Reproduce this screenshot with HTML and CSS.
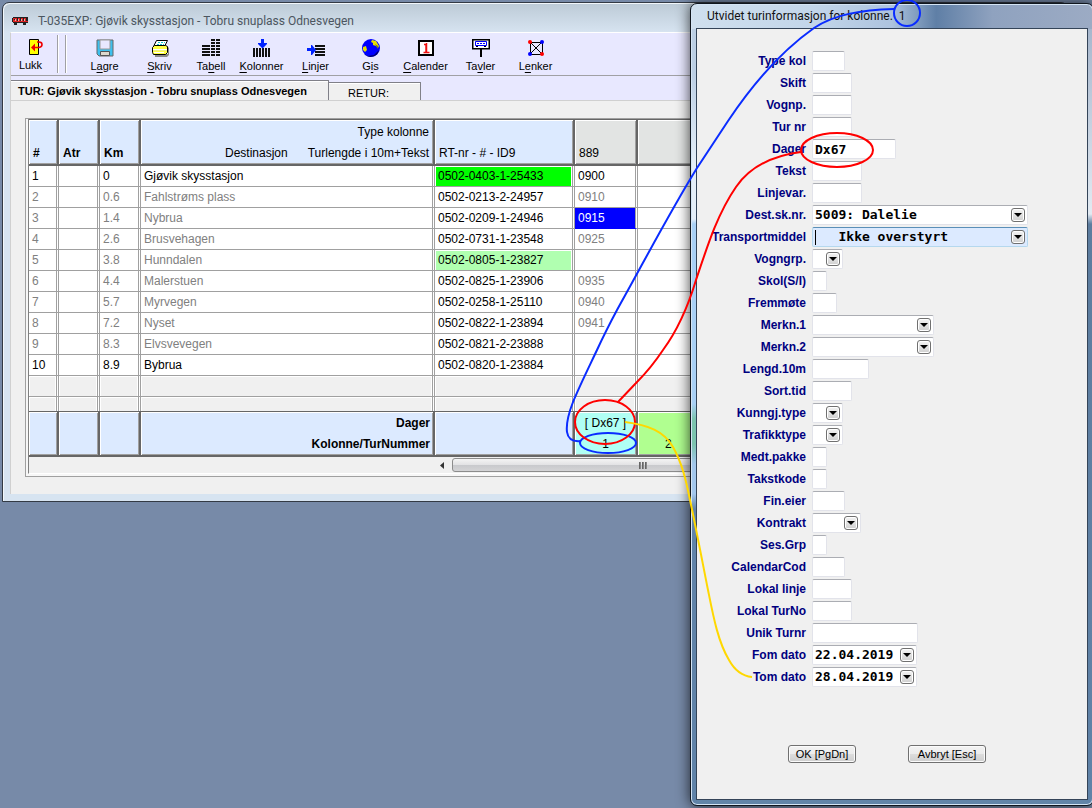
FILE: index.html
```html
<!DOCTYPE html>
<html lang="no">
<head>
<meta charset="utf-8">
<title>T-035EXP: Gjøvik skysstasjon - Tobru snuplass Odnesvegen</title>
<link rel="stylesheet" href="styles.css">
</head>
<body class="desktop">
<main class="window">
  <header class="window-title">
    <svg class="bus" width="17" height="9" viewBox="0 0 17 9" aria-hidden="true"><path fill="#d22" d="M1 1h15v6H1z"/><path fill="#222" d="M0 2h1v4H0zM1 1h15v1H1zM2 3h2v1H2zM5 2h1v3H5zM8 2h1v3H8zM11 2h1v3h-1zM14 2h2v3h-2zM1 6h15v1H1zM2 7h3v2H2zM11 7h3v2h-3z"/><path fill="#eaa" d="M3 3h1v2H3zM6 3h1v2H6zM9 3h1v2H9zM12 3h1v2h-1z"/></svg>
    <h1>T-035EXP: Gjøvik skysstasjon - Tobru snuplass Odnesvegen</h1>
  </header>
  <div class="client">
    <nav class="toolbar">
      <button class="tool tool-close"><svg width="18" height="18" viewBox="0 0 18 18"><path d="M5.500 1.500h9v15h-9z" fill="#ff0" stroke="#000"/><path d="M13 3.500h2q3 0 3 2.500t-3 3H9" transform="translate(0 .5)" fill="none" stroke="#e00" stroke-width="1.600"/><path d="M7 9.500l4-4v8z" fill="#e00"/></svg><span>Lukk</span></button>
      <span class="grip"></span>
      <button class="tool tool-m"><svg width="18" height="18" viewBox="0 0 18 18"><path d="M1 1h16v16H3l-2-2z" fill="#3cc0ee" stroke="#666"/><path d="M4 1h10v9H4z" fill="#e8e8ff" stroke="#999"/><path d="M4.500 12.500h9v4h-9z" fill="#ddd8cc" stroke="#555"/></svg><span>L<u>a</u>gre</span></button>
      <button class="tool tool-m"><svg width="18" height="18" viewBox="0 0 18 18"><path d="M4 15h13V8l1 1v7l-2 2H4z" fill="#888"/><path d="M5.500 1.500h11l-3 6h-11z" fill="#fff" stroke="#000"/><path d="M7 3.500h7M6 5.500h7" stroke="#1cc" stroke-dasharray="2 1"/><path d="M1.500 8.500l2-2h11l2 1v6l-2 2h-12l-1-2z" fill="#ff4" stroke="#000"/><path d="M2 10.500h14M3 13.500h10" stroke="#fff"/><path d="M2 11.500h14" stroke="#ee8"/></svg><span><u>S</u>kriv</span></button>
      <button class="tool tool-s"><svg width="18" height="18" viewBox="0 0 18 18"><path d="M0 7h8M0 10h8M0 13h8M0 16h8M9 4h4M9 7h4M9 10h4M9 13h4M9 16h4M9 1h4M14 1h4M14 4h4M14 7h4M14 10h4M14 13h4M14 16h4" stroke="#111" stroke-width="2"/></svg><span>Ta<u>b</u>ell</span></button>
      <button class="tool tool-k"><svg width="18" height="18" viewBox="0 0 18 18"><path d="M1 9v9M4 9v9M7 9v9M10 9v9M13 9v9M16 9v9" stroke="#111" stroke-width="2"/><path d="M8 0h3v4h3v1L9.500 9.500 5 5V4h3z" fill="#02f"/></svg><span><u>K</u>olonner</span></button>
      <button class="tool tool-m"><svg width="18" height="18" viewBox="0 0 18 18"><path d="M8 7h10M8 10h10M8 13h10M8 16h10" stroke="#111" stroke-width="2"/><path d="M0 9h4V6h1l4 5-4 5H4v-4H0z" fill="#02f"/></svg><span><u>L</u>injer</span></button>
      <button class="tool tool-m"><svg width="18" height="18" viewBox="0 0 18 18"><circle cx="9" cy="9" r="9" fill="#00f"/><path d="M2 15a9 9 0 0 0 14-1l1-3-5 5-6 1z" fill="#00006a"/><path d="M10 1l4 1 3 5-1 2-2-2-3-1V4L9 3zM1 8l3-1 1 4-2 2-2-2z" fill="#e8e000"/><path d="M13 5l3 2v3l-2-3z" fill="#7a7a20"/></svg><span>G<u>i</u>s</span></button>
      <button class="tool tool-m"><svg width="18" height="18" viewBox="0 0 18 18"><path d="M2 2h14v14H2z" fill="#fff" stroke="#000" stroke-width="2"/><path d="M7 5.500h2V13M6.500 13.500h6M9.500 4v9" fill="none" stroke="#e11" stroke-width="1.500"/></svg><span><u>C</u>alender</span></button>
      <button class="tool tool-m"><svg width="18" height="18" viewBox="0 0 18 18"><path d="M.75.75h16.500v9H.75z" fill="#fff" stroke="#000" stroke-width="1.500"/><path d="M3.500 2.500h11v4h-11z" fill="#fff" stroke="#00f"/><path d="M5 4.500h8" stroke="#00f" stroke-dasharray="2 1"/><path d="M4 7h2v1H4zM12 7h2v1h-2zM8 9h2v9H8z"/></svg><span>Ta<u>v</u>ler</span></button>
      <button class="tool tool-m"><svg width="18" height="18" viewBox="0 0 18 18"><path d="M3.500 3.500h12v12h-12zM3 3l12 12M15 3L3 15" fill="none" stroke="#000"/><g fill="#f00"><circle cx="3" cy="3" r="2"/><circle cx="15" cy="15" r="2"/></g><g fill="#00f"><circle cx="15" cy="3" r="2"/><circle cx="3" cy="15" r="2"/></g></svg><span>L<u>e</u>nker</span></button>
    </nav>
    <div class="tabs" role="tablist">
      <button class="tab tab-active" role="tab" aria-selected="true">TUR: Gjøvik skysstasjon - Tobru snuplass Odnesvegen</button>
      <button class="tab" role="tab" aria-selected="false">RETUR:</button>
    </div>
    <section class="page">
      <div class="grid-frame">
        <table class="grid">
          <colgroup><col class="c-no"><col class="c-atr"><col class="c-km"><col class="c-dest"><col class="c-rt"><col class="c-run"><col></colgroup>
          <thead>
            <tr><th>#</th><th>Atr</th><th>Km</th><th class="right plain">Type kolonne<br><span class="gap">Destinasjon</span>Turlengde i 10m+Tekst</th><th class="plain">RT-nr - # - ID9</th><th class="plain run">889</th><th class="run"></th></tr>
          </thead>
          <tbody>
            <tr class="main"><td>1</td><td></td><td>0</td><td>Gjøvik skysstasjon</td><td class="rt green">0502-0403-1-25433</td><td>0900</td><td></td></tr>
            <tr><td>2</td><td></td><td>0.6</td><td>Fahlstrøms plass</td><td class="rt">0502-0213-2-24957</td><td>0910</td><td></td></tr>
            <tr><td>3</td><td></td><td>1.4</td><td>Nybrua</td><td class="rt">0502-0209-1-24946</td><td class="selected">0915</td><td></td></tr>
            <tr><td>4</td><td></td><td>2.6</td><td>Brusvehagen</td><td class="rt">0502-0731-1-23548</td><td>0925</td><td></td></tr>
            <tr><td>5</td><td></td><td>3.8</td><td>Hunndalen</td><td class="rt pale">0502-0805-1-23827</td><td></td><td></td></tr>
            <tr><td>6</td><td></td><td>4.4</td><td>Malerstuen</td><td class="rt">0502-0825-1-23906</td><td>0935</td><td></td></tr>
            <tr><td>7</td><td></td><td>5.7</td><td>Myrvegen</td><td class="rt">0502-0258-1-25110</td><td>0940</td><td></td></tr>
            <tr><td>8</td><td></td><td>7.2</td><td>Nyset</td><td class="rt">0502-0822-1-23894</td><td>0941</td><td></td></tr>
            <tr><td>9</td><td></td><td>8.3</td><td>Elvsvevegen</td><td class="rt">0502-0821-2-23888</td><td></td><td></td></tr>
            <tr class="main"><td>10</td><td></td><td>8.9</td><td>Bybrua</td><td class="rt">0502-0820-1-23884</td><td></td><td></td></tr>
            <tr class="empty"><td></td><td></td><td></td><td></td><td></td><td></td><td></td></tr>
            <tr class="empty short"><td></td><td></td><td></td><td></td><td></td><td></td><td></td></tr>
          </tbody>
          <tfoot>
            <tr><td></td><td></td><td></td><td class="right bold">Dager<br>Kolonne/TurNummer</td><td></td><td class="center cyan">[ Dx67 ]<br>1</td><td class="lime"><br><span class="second">2</span></td></tr>
          </tfoot>
        </table>
        <div class="scroll">
          <svg class="scroll-arrow" width="18" height="16" viewBox="0 0 18 16" aria-hidden="true"><path d="M10 4v7L6 7.500z" fill="#333"/></svg>
          <div class="thumb"><i></i><i></i><i></i></div>
        </div>
      </div>
    </section>
  </div>
</main>

<section class="dialog" role="dialog" aria-labelledby="dialog-title">
  <h2 class="dialog-title" id="dialog-title">Utvidet turinformasjon for kolonne.&nbsp; 1</h2>
  <form class="dialog-body">
    <div class="fields">
      <label for="f1">Type kol</label><input id="f1" class="w33">
      <label for="f2">Skift</label><input id="f2" class="w40">
      <label for="f3">Vognp.</label><input id="f3" class="w40">
      <label for="f4">Tur nr</label><input id="f4" class="w40">
      <label for="f5">Dager</label><input id="f5" class="w84" value="Dx67">
      <label for="f6">Tekst</label><input id="f6" class="w50">
      <label for="f7">Linjevar.</label><input id="f7" class="w50">
      <label for="f8">Dest.sk.nr.</label><span class="combo w216"><select id="f8"><option>5009: Dalelie</option></select></span>
      <label for="f9">Transportmiddel</label><span class="combo focus w216"><select id="f9"><option>&nbsp;&nbsp;&nbsp;Ikke overstyrt</option></select></span>
      <label for="f10">Vogngrp.</label><span class="combo w31"><select id="f10"></select></span>
      <label for="f11">Skol(S/I)</label><input id="f11" class="w15">
      <label for="f12">Fremmøte</label><input id="f12" class="w25">
      <label for="f13">Merkn.1</label><span class="combo w122"><select id="f13"></select></span>
      <label for="f14">Merkn.2</label><span class="combo w122"><select id="f14"></select></span>
      <label for="f15">Lengd.10m</label><input id="f15" class="w57">
      <label for="f16">Sort.tid</label><input id="f16" class="w40">
      <label for="f17">Kunngj.type</label><span class="combo w31"><select id="f17"></select></span>
      <label for="f18">Trafikktype</label><span class="combo w31"><select id="f18"></select></span>
      <label for="f19">Medt.pakke</label><input id="f19" class="w15">
      <label for="f20">Takstkode</label><input id="f20" class="w15">
      <label for="f21">Fin.eier</label><input id="f21" class="w33">
      <label for="f22">Kontrakt</label><span class="combo w49"><select id="f22"></select></span>
      <label for="f23">Ses.Grp</label><input id="f23" class="w15">
      <label for="f24">CalendarCod</label><input id="f24" class="w33">
      <label for="f25">Lokal linje</label><input id="f25" class="w40">
      <label for="f26">Lokal TurNo</label><input id="f26" class="w40">
      <label for="f27">Unik Turnr</label><input id="f27" class="w106">
      <label for="f28">Fom dato</label><span class="combo w105"><select id="f28"><option>22.04.2019</option></select></span>
      <label for="f29">Tom dato</label><span class="combo w105"><select id="f29"><option>28.04.2019</option></select></span>
    </div>
    <div class="actions">
      <button type="button" class="push push-ok">OK [PgDn]</button>
      <button type="button" class="push push-cancel">Avbryt [Esc]</button>
    </div>
  </form>
</section>

<svg class="marks" aria-hidden="true">
  <g stroke="#0a2cff">
    <circle cx="907" cy="13" r="13"/>
    <path d="M894 9C862 10 835 14 814 28C780 52 750 88 728 121L697 168C668 215 645 260 617 310C609 325 603 337 597 350C588 369 580 385 573 402C568 415 566 424 567 432C568 439 572 442 581 441"/>
    <ellipse cx="608" cy="443" rx="28" ry="10"/>
  </g>
  <g stroke="#f00">
    <ellipse cx="837" cy="150" rx="36" ry="17"/>
    <path d="M801 152C770 156 749 168 736 187C718 213 708 244 696 280C687 310 677 331 663 350C655 362 646 373 637 382L618 402"/>
    <ellipse cx="605" cy="422" rx="30" ry="22"/>
  </g>
  <path stroke="#ffd800" d="M625 422C648 425 664 431 673 447C682 463 686 480 690 500C696 528 703 565 708 590C713 615 718 642 729 660C735 671 742 676 752 677"/>
</svg>
</body>
</html>
```
FILE: styles.css
```css
* { box-sizing: border-box; }

.desktop {
  margin: 0;
  height: 100vh;
  position: relative;
  overflow: hidden;
  background: #778aa8;
  font: 12px/21px "Liberation Sans", sans-serif;
  color: #000;
}

button { font: inherit; color: inherit; }

/* Main window */
.window {
  position: absolute;
  left: 2px;
  top: 2px;
  right: 24px;
  padding: 0 7px 7px;
  border: 1px solid #333a44;
  border-radius: 7px 7px 0 0;
  background: linear-gradient(#bccad6, #d7e4f1 30px);
  box-shadow: inset 1px 1px #f2f7fb;
}
.window-title {
  display: flex;
  align-items: center;
  gap: 9px;
  height: 29px;
  padding: 6px 0 0 2px;
}
.window-title h1 {
  margin: 0;
  font: 12px/20px Roboto, sans-serif;
  color: #4c5660;
}
.client {
  border-top: 1px solid #fff;
  border-left: 1px solid #d0d0d0;
  background: #f0f0f0;
}
.toolbar {
  display: flex;
  height: 43px;
  border-bottom: 1px solid #a0a0a4;
  background: #e8e8ff;
}
.tool {
  display: flex;
  flex-direction: column;
  align-items: center;
  gap: 2px;
  padding: 6px 0 0;
  border: 0;
  background: none;
  font-size: 11px;
  line-height: 14px;
}
.tool-close { width: 39px; padding-top: 5px; }
.tool-close svg { margin-left: 4px; overflow: visible; }
.tool-m { width: 55px; }
.tool-s { width: 48px; }
.tool-k { width: 53px; }
.tool u { text-underline-offset: 2px; }
.grip {
  width: 9px;
  height: 38px;
  margin: 2px 11px 0 7px;
  border: solid #a0a0a4;
  border-width: 0 1px;
  box-shadow: inset 1px 0 #fff, 1px 0 #fff;
}
.tabs {
  display: flex;
  align-items: flex-end;
  height: 25px;
  background: #e8e8ff;
  border-bottom: 1px solid #d0d0d0;
}
.tab {
  width: 92px;
  height: 18px;
  padding: 0 12px 0 0;
  border: solid #808088;
  border-width: 1px 1px 0 0;
  background: #f0f0f0;
  box-shadow: inset 0 1px #fff;
  line-height: 20px;
  font-size: 11px;
}
.tab-active {
  width: 318px;
  height: 20px;
  padding: 0 0 0 7px;
  text-align: left;
  font-weight: bold;
}
.page { padding: 17px 0 17px 14px; }

/* Timetable grid */
.grid-frame {
  border: solid #a0a0a0;
  border-width: 1px 0 1px 1px;
  padding: 0 0 2px 2px;
  background: #f7f7f7;
}
.grid {
  width: 100%;
  table-layout: fixed;
  border-collapse: separate;
  border-spacing: 0;
  border-left: 1px solid #808080;
  background: #fff;
}
.c-no { width: 30px; }
.c-atr { width: 41px; }
.c-km { width: 41px; }
.c-dest { width: 294px; }
.c-rt { width: 140px; }
.c-run { width: 63px; }
.grid th, .grid td {
  padding: 0 3px;
  text-align: left;
  white-space: nowrap;
}
.grid th, tfoot td {
  border: solid #666;
  border-width: 1px 2px 2px 0;
  background: #dceaff;
  box-shadow: inset 1px 1px #fff, inset -1px -1px #a0a0a0;
}
.grid th { height: 47px; vertical-align: bottom; padding: 0 4px; }
.grid th.run { background: #e2e4e3; }
.grid .plain { font-weight: normal; }
.grid .right { text-align: right; }
.grid .bold { font-weight: bold; }
.grid .center { text-align: center; }
.gap { margin-right: 20px; }
tbody td {
  height: 21px;
  border-right: 3px double #a0a0a0;
  border-bottom: 1px solid #a0a0a0;
  background: #fff;
  box-shadow: inset 1px 1px #fff, inset -1px 0 #fff;
  color: #808080;
  line-height: 20px;
}
.main td, td.rt { color: #000; }
td.green { background: #0f0 padding-box; }
td.pale { background: #b0ffb0 padding-box; }
td.selected {
  background: #00f padding-box;
  color: #fff;
  box-shadow: none;
  border-bottom-color: #00f;
}
.empty td { background: #f0f0f0 padding-box; }
.short td { height: 14px; border-bottom: 0; }
tfoot td { height: 46px; }
td.cyan { background: #b0fff4; }
td.lime { background: #b0ff90; }
.second { margin-left: 24px; }
.scroll {
  display: flex;
  height: 17px;
  padding: 1px 0 1px 405px;
  border-left: 1px solid #808080;
  border-bottom: 1px solid #fff;
  background: #f0f0f0;
}
.scroll-arrow { flex: none; }
.thumb {
  display: flex;
  flex: none;
  justify-content: center;
  align-items: center;
  gap: 1px;
  width: 382px;
  border: 1px solid #8c8c8c;
  border-radius: 3px;
  background: linear-gradient(#f4f4f4, #e2e2e4 50%, #c8c9cc 51%, #d4d4d6);
}
.thumb i { width: 2px; height: 7px; background: linear-gradient(90deg, #555, #999); }

/* Column details dialog */
.dialog {
  position: absolute;
  left: 690px;
  right: -2px;
  top: 3px;
  bottom: 2px;
  display: flex;
  flex-direction: column;
  padding: 0 5px 5px;
  border: 1px solid #10161e;
  border-radius: 7px;
  background:
    linear-gradient(90deg, #cfdfee, #c3d6ea 30%, #adc3de 50%, #5f7fa6 61%, #8fa2bf 75%, #9cabc4) top / 100% 25px no-repeat,
    linear-gradient(#bccfe4 70px, #e4eef8 160px, #e4eef8 215px, #a9d0f5 220px, #a9d0f5 400px, #7cc4ae 415px, #7cc4ae 440px, #a3c7ec 460px, #a3c7ec 490px, #6083a8 505px) left / 6px 100% no-repeat,
    linear-gradient(#9fb0c8, #e2eaf2 210px, #5d7d9f 220px, #6083a8) right / 6px 100% no-repeat,
    #6285a8;
  box-shadow: inset 0 0 0 1px #d4e4f4, 0 0 14px rgba(0, 0, 0, .75);
}
.dialog-title {
  margin: 0;
  height: 24px;
  padding-left: 11px;
  font: 12px/24px Roboto, sans-serif;
  color: #111;
}
.dialog-body {
  flex: 1;
  padding-top: 22px;
  border: 1px solid #344458;
  background: #f0f0f0;
}
.fields {
  display: grid;
  grid-template-columns: 109px 1fr;
  grid-auto-rows: 20px;
  gap: 2px 6px;
  align-items: stretch;
  line-height: 20px;
}
.fields label {
  text-align: right;
  font-weight: bold;
  color: #000080;
}
.fields input, .combo {
  height: 20px;
  border: 1px solid #e2e3ea;
  border-top-color: #abadb3;
  border-radius: 2px;
  background: #fff;
}
.fields input, .fields select {
  padding: 0 2px;
  font: bold 13px/18px "DejaVu Sans Mono", monospace;
  color: #000;
}
.combo { position: relative; display: block; }
.combo select {
  display: block;
  width: 100%;
  height: 18px;
  border: 0;
  appearance: none;
  background: transparent;
}
.combo::before {
  content: "";
  position: absolute;
  right: 2px;
  top: 2px;
  width: 14px;
  height: 14px;
  border: 1px solid #707070;
  border-radius: 3px;
  background: linear-gradient(#f4f4f4, #cfcfcf);
  box-shadow: inset 0 0 0 1px #fff;
}
.combo::after {
  content: "";
  position: absolute;
  right: 5px;
  top: 7px;
  border: 4px solid transparent;
  border-top-color: #000;
  border-bottom: 0;
}
.combo::before, .combo::after { box-sizing: border-box; }
.focus {
  border-color: #b5d8ee;
  border-top-color: #5a8fb8;
  background: linear-gradient(#000, #000) 2px 2px / 1px 15px no-repeat #dceaff;
}
.w15 { width: 15px; }
.w25 { width: 25px; }
.w31 { width: 31px; }
.w33 { width: 33px; }
.w40 { width: 40px; }
.w49 { width: 49px; }
.w50 { width: 50px; }
.w57 { width: 57px; }
.w84 { width: 84px; }
.w105 { width: 105px; }
.w106 { width: 106px; }
.w122 { width: 122px; }
.w216 { width: 216px; }
.actions {
  display: flex;
  gap: 52px;
  padding: 58px 0 0 91px;
}
.push {
  height: 18px;
  padding: 0;
  border: 1px solid #707070;
  border-radius: 3px;
  background: linear-gradient(#f3f3f3, #ebebeb 50%, #dcdcdc 51%, #cfcfcf);
  box-shadow: inset 0 0 0 1px #fbfbfb;
  font-size: 11px;
  line-height: 16px;
}
.push-ok { width: 68px; }
.push-cancel { width: 78px; }

/* Hand-drawn callouts lying over both windows */
.marks {
  position: absolute;
  inset: 0;
  width: 100%;
  height: 100%;
  pointer-events: none;
  fill: none;
  stroke-width: 2px;
}
```
